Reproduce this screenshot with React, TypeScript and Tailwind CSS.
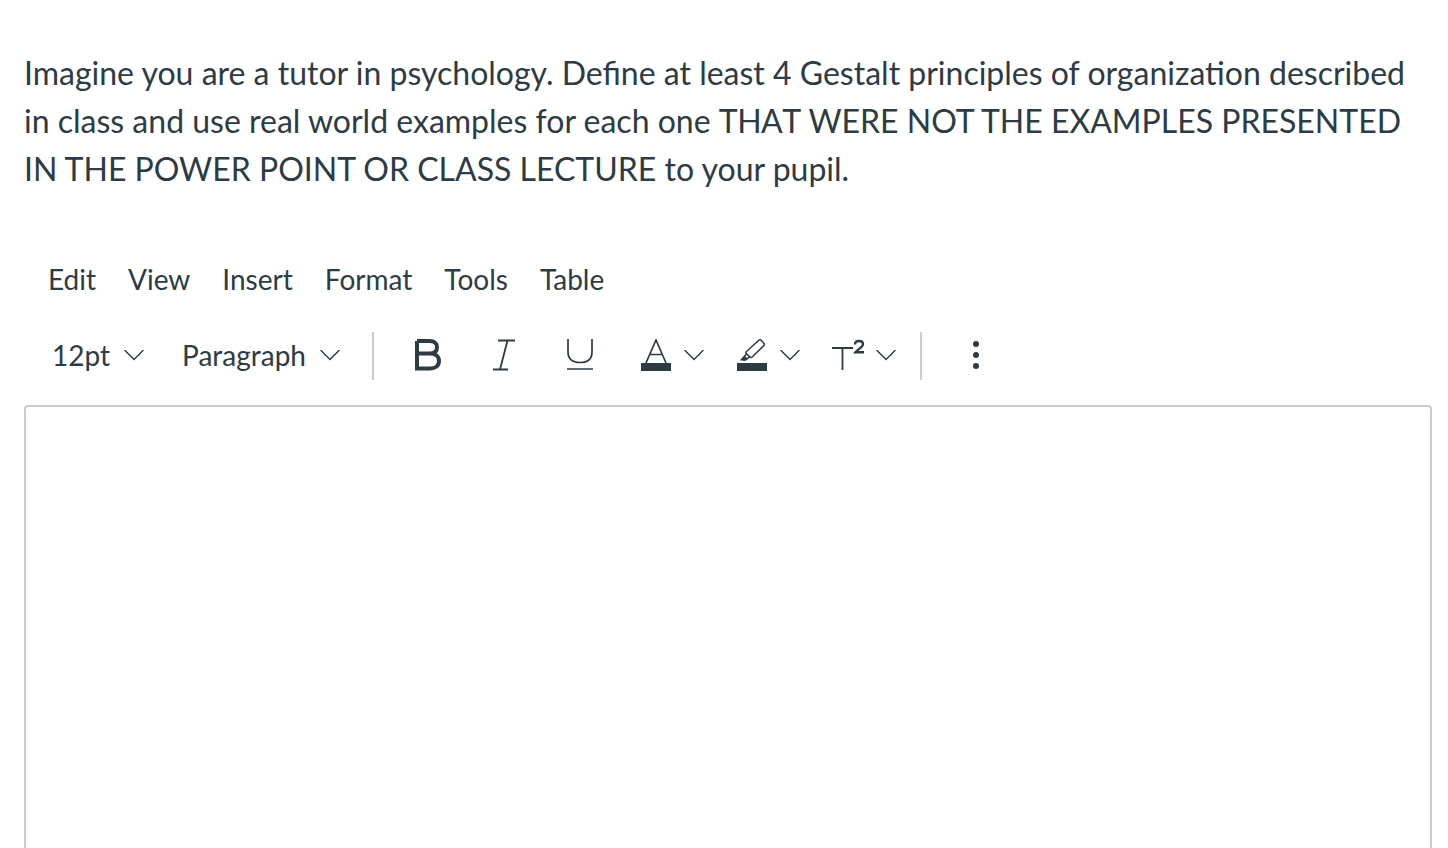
const menus = ["Edit", "View", "Insert", "Format", "Tools", "Table"];

const Chevron = () => (
	<svg width="20" height="12" viewBox="0 0 20 12" fill="none" stroke="#2d3b45" strokeWidth="1.4">
		<path d="M0.5 0 L10 9.5 L19.5 0" />
	</svg>
);

const Divider = () => <div className="h-12 w-0.5 bg-[#c7cdd1]" />;

const BoldIcon = () => (
	<svg width="32" height="34" viewBox="0 0 32 34" fill="none" stroke="#2d3b45" strokeWidth="4">
		<path d="M4 2 H16.5 C21.5 2 24 4.6 24 8.2 C24 12 21.5 14.6 16.5 14.6 H4 M16.5 14.6 C22.5 14.6 26 17.4 26 22 C26 26.6 22.5 29.5 17 29.5 H4 V2" />
	</svg>
);

const ItalicIcon = () => (
	<svg width="24" height="34" viewBox="0 0 24 34" fill="none" stroke="#2d3b45" strokeWidth="1.8">
		<path d="M6 1.5 H23 M1 30.5 H16 M15.5 1.5 L8 30.5" />
	</svg>
);

const UnderlineIcon = () => (
	<svg width="28" height="34" viewBox="0 0 28 34" fill="none" stroke="#2d3b45" strokeWidth="1.7">
		<path d="M2 0 V13 C2 20 6.5 23.5 14 23.5 C21.5 23.5 26 20 26 13 V0 M1 30 H27" />
	</svg>
);

const TextColorIcon = () => (
	<svg width="30" height="34" viewBox="0 0 30 34" fill="none" stroke="#2d3b45" strokeWidth="1.7">
		<path d="M5 24 L15 1 L25 24 M8 15.5 H22" />
		<rect x="0" y="24" width="30" height="8" fill="#2d3b45" stroke="none" />
	</svg>
);

const HighlightIcon = () => (
	<svg width="30" height="34" viewBox="0 0 30 34" fill="none" stroke="#2d3b45" strokeWidth="1.5">
		<g transform="translate(0,-1)">
			<path d="M9.5 13.5 L21.5 2.5 C22.5 1.6 23.5 1.6 24.4 2.5 L26.7 5 C27.5 5.9 27.5 6.9 26.6 7.8 L15.2 19 C14.5 19.6 13.5 19.6 12.8 18.9 L9.4 15.8 C8.7 15.1 8.8 14.2 9.5 13.5 Z" />
			<path d="M9.6 15.8 L7.3 18.5 L9.8 21 L12.6 18.8" />
			<path d="M7.3 18.5 L4.4 21.8 L8 22.3 L9.8 21" fill="#2d3b45" />
		</g>
		<rect x="0" y="24" width="30" height="8" fill="#2d3b45" stroke="none" />
	</svg>
);

const SuperscriptIcon = () => (
	<svg width="34" height="34" viewBox="0 0 34 34" fill="none" stroke="#2d3b45">
		<path d="M1 9 H22 M11.5 9 V31" strokeWidth="1.8" />
		<path d="M24 5.5 C24 3 26 2 28 2 C30.5 2 32 3.4 32 5.2 C32 8.2 27 10 24.5 13.2 H33" strokeWidth="2.4" />
	</svg>
);

const MoreIcon = () => (
	<svg width="8" height="32" viewBox="0 0 8 32" fill="#2d3b45">
		<circle cx="4" cy="4" r="3" />
		<circle cx="4" cy="15" r="3" />
		<circle cx="4" cy="26" r="3" />
	</svg>
);

export default function App() {
	return (
		<div className="h-[848px] overflow-hidden bg-white pl-6 pr-4 pt-[49px] font-['Lato',sans-serif] text-[#2d3b45]">
			<div className="text-[32px] leading-12">
				<p>Imagine you are a tutor in psychology. Define at least 4 Gestalt principles of organization described</p>
				<p className="whitespace-pre">
					<span>in class and use real world examples for each one </span>
					<span className="tracking-[-0.5px] [font-kerning:none]">THAT</span>
					<span> WERE NOT THE EXAMPLES PRESENTED</span>
				</p>
				<p>IN THE POWER POINT OR CLASS LECTURE to your pupil.</p>
			</div>
			<div className="mt-[62px] flex h-12 items-center gap-8 pl-6 text-[28px]">
				{menus.map((m) => (
					<span key={m}>{m}</span>
				))}
			</div>
			<div className="mt-[29px] flex h-12 items-center pl-7 text-[28px]">
				<span className="pb-0.5">12pt</span>
				<span className="ml-3.5">
					<Chevron />
				</span>
				<span className="ml-[38px] pb-0.5">Paragraph</span>
				<span className="ml-3.5 mr-[32px]">
					<Chevron />
				</span>
				<Divider />
				<div className="ml-[39px]">
					<BoldIcon />
				</div>
				<div className="ml-[47px]">
					<ItalicIcon />
				</div>
				<div className="ml-[50px]">
					<UnderlineIcon />
				</div>
				<div className="ml-[47px]">
					<TextColorIcon />
				</div>
				<span className="ml-[13px]">
					<Chevron />
				</span>
				<div className="ml-[33px]">
					<HighlightIcon />
				</div>
				<span className="ml-[13px]">
					<Chevron />
				</span>
				<div className="ml-[31px]">
					<SuperscriptIcon />
				</div>
				<span className="ml-[11px]">
					<Chevron />
				</span>
				<div className="ml-[24px]">
					<Divider />
				</div>
				<div className="ml-[50px]">
					<MoreIcon />
				</div>
			</div>
			<div className="mt-[25px] h-[600px] rounded-t border-2 border-[#c7cdd1]" />
		</div>
	);
}
